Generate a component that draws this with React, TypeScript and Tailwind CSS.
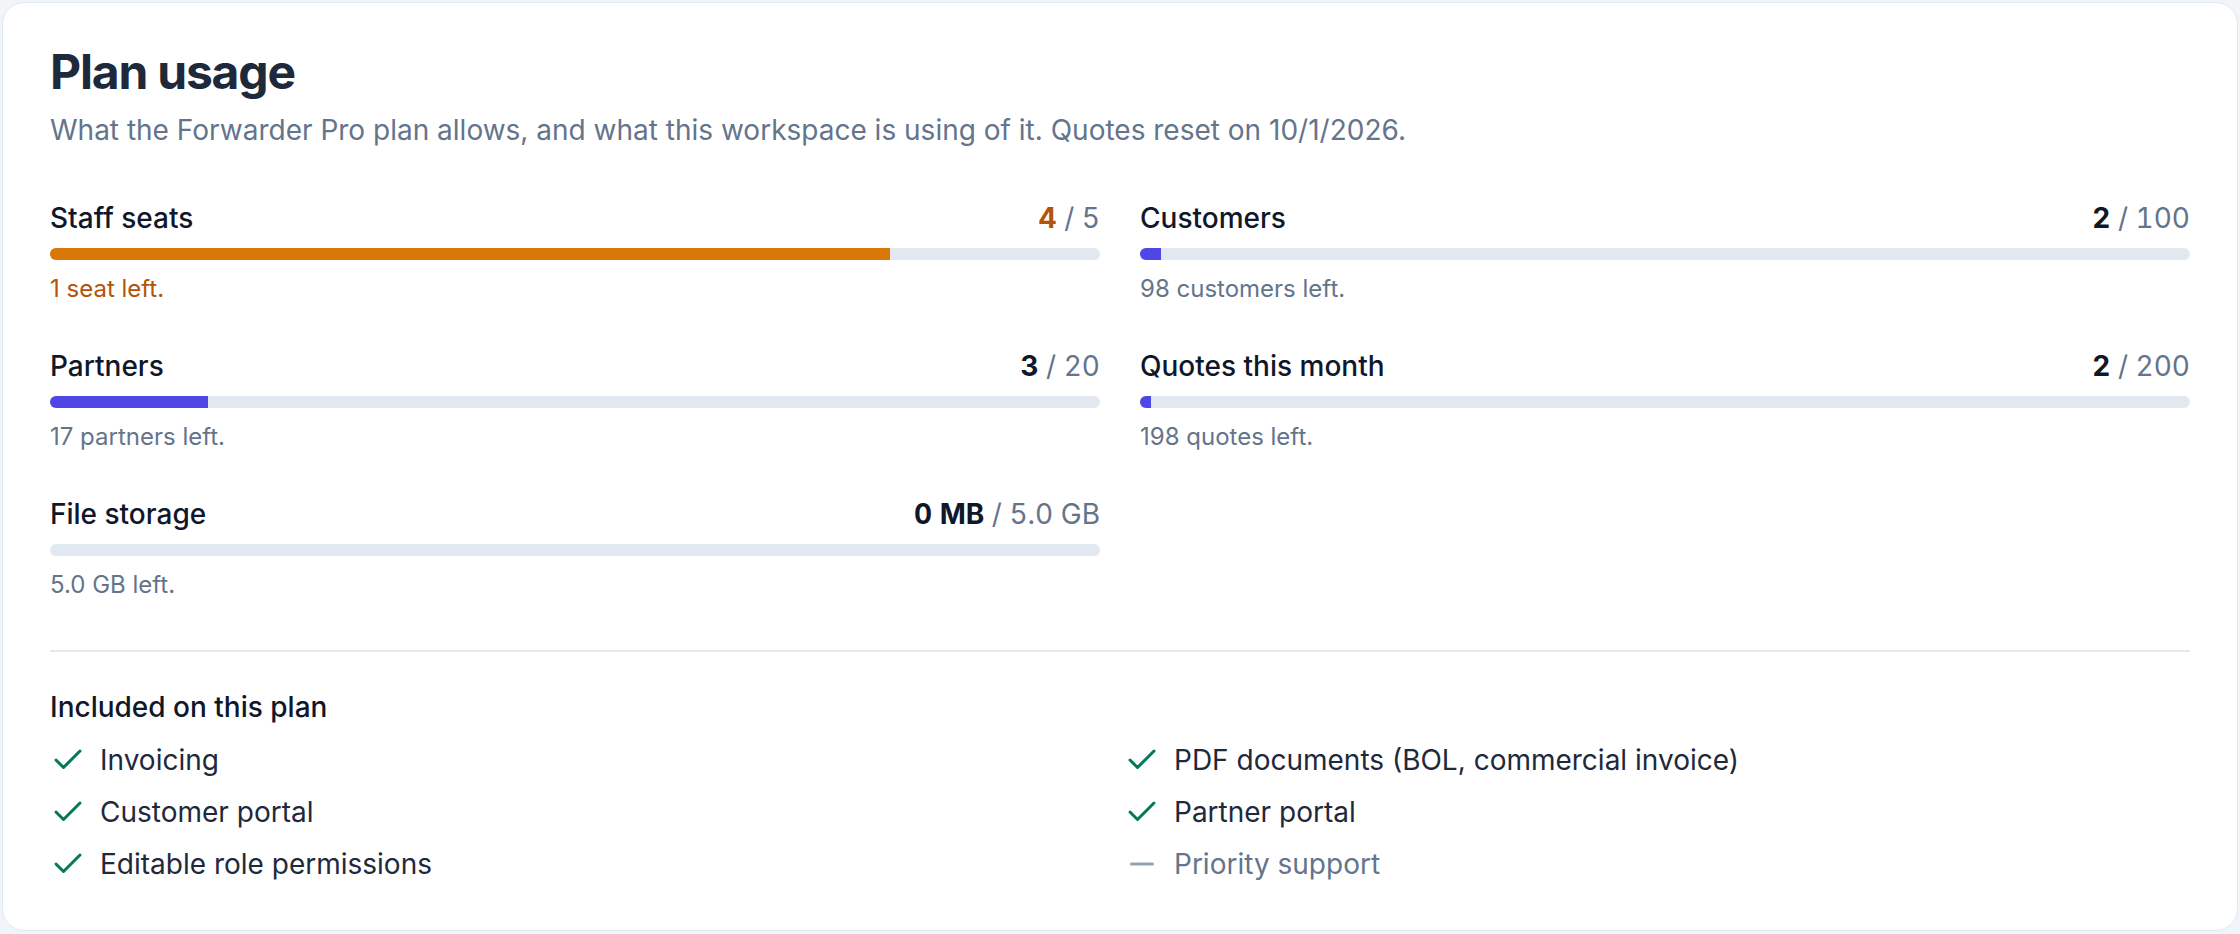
import { Check, Minus } from "lucide-react"

type Usage = {
  label: string
  used: string
  limit: string
  pct: number
  left: string
  warn?: boolean
}

const usage: Usage[] = [
  { label: "Staff seats", used: "4", limit: "5", pct: 80, left: "1 seat left.", warn: true },
  { label: "Customers", used: "2", limit: "100", pct: 2, left: "98 customers left." },
  { label: "Partners", used: "3", limit: "20", pct: 15, left: "17 partners left." },
  { label: "Quotes this month", used: "2", limit: "200", pct: 1, left: "198 quotes left." },
  { label: "File storage", used: "0 MB", limit: "5.0 GB", pct: 0, left: "5.0 GB left." },
]

const features = [
  { name: "Invoicing", on: true },
  { name: "PDF documents (BOL, commercial invoice)", on: true },
  { name: "Customer portal", on: true },
  { name: "Partner portal", on: true },
  { name: "Editable role permissions", on: true },
  { name: "Priority support", on: false },
]

function UsageRow({ item }: { item: Usage }) {
  return (
    <div className="flex flex-col">
      <div className="flex items-baseline justify-between leading-[40px]">
        <span className="text-[28px] font-medium text-[#0f172a]">{item.label}</span>
        <span className="text-[28px] tabular-nums text-[#64748b]">
          <span className={item.warn ? "font-bold text-[#b45309]" : "font-bold text-[#0f172a]"}>
            {item.used}
          </span>{" "}
          / {item.limit}
        </span>
      </div>
      <div className="mt-[10px] h-[12px] w-full overflow-hidden rounded-full bg-[#e2e8f0]">
        <div
          className={item.warn ? "h-full bg-[#d97706]" : "h-full bg-[#4f46e5]"}
          style={{ width: `${item.pct}%` }}
        />
      </div>
      <p
        className={
          "mt-[13px] text-[24px] leading-[32px] " +
          (item.warn ? "text-[#b45309]" : "text-[#64748b]")
        }
      >
        {item.left}
      </p>
    </div>
  )
}

export default function App() {
  return (
    <div className="min-h-screen bg-[#f1f5f9] p-[2px] font-['Inter',sans-serif]">
      <div className="rounded-[22px] border border-[#e2e8f0] bg-white px-[47px] pt-[45px] pb-[46px]">
        <h1 className="text-[48px] font-bold leading-[48px] tracking-[-1.2px] text-[#1e293b]">
          Plan usage
        </h1>
        <p className="mt-[14px] text-[28px] leading-[40px] text-[#64748b]">
          What the Forwarder Pro plan allows, and what this workspace is using of it. Quotes reset on
          10/1/2026.
        </p>

        <div className="mt-[48px] grid grid-cols-2 gap-x-[40px] gap-y-[41px]">
          {usage.map((u) => (
            <UsageRow key={u.label} item={u} />
          ))}
        </div>

        <div className="mt-[49px] border-t-2 border-[#e2e8f0]" />

        <h2 className="mt-[37px] text-[28px] font-medium leading-[36px] text-[#0f172a]">
          Included on this plan
        </h2>
        <ul className="mt-[15px] grid grid-cols-2 gap-x-[8px] gap-y-[12px]">
          {features.map((f) => (
            <li key={f.name} className="flex items-center gap-[14px] leading-[40px]">
              {f.on ? (
                <Check className="h-[36px] w-[36px] shrink-0 text-[#047857]" strokeWidth={2} />
              ) : (
                <Minus className="h-[36px] w-[36px] shrink-0 text-[#94a3b8]" strokeWidth={2} />
              )}
              <span className={f.on ? "text-[28px] text-[#1e293b]" : "text-[28px] text-[#64748b]"}>
                {f.name}
              </span>
            </li>
          ))}
        </ul>
      </div>
    </div>
  )
}
